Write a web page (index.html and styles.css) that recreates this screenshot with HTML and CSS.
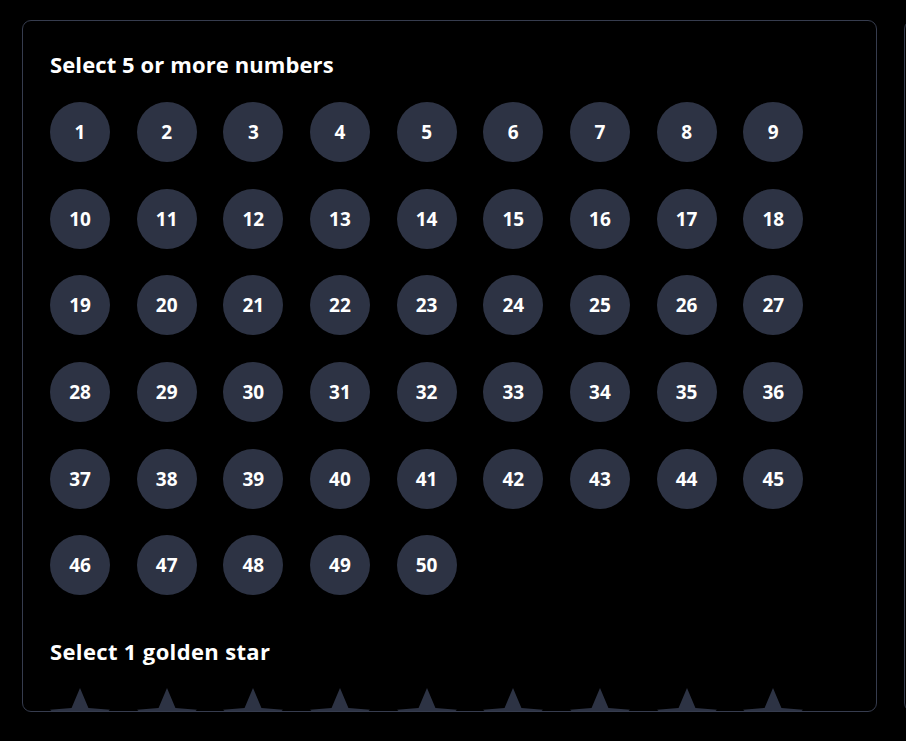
FILE: index.html
```html
<!doctype html>
<html lang="en">
  <head>
    <meta charset="utf-8">
    <meta name="viewport" content="width=device-width, initial-scale=1">
    <title>Pick your numbers</title>
    <link rel="stylesheet" href="styles.css">
  </head>
  <body>
    <main class="board">
      <section class="panel">
        <h2 class="panel-title">Select 5 or more numbers</h2>
        <div class="ball-grid" id="numbers"></div>

        <h2 class="panel-title stars-title">Select 1 golden star</h2>
        <div class="ball-grid" id="stars"></div>
      </section>
      <section class="panel panel-side"></section>
    </main>
    <script>
      const numbers = document.getElementById('numbers');
      for (let n = 1; n <= 50; n++) {
        const ball = document.createElement('button');
        ball.className = 'ball';
        ball.type = 'button';
        ball.textContent = n;
        numbers.appendChild(ball);
      }

      const stars = document.getElementById('stars');
      const starPath = 'M12 17.27L18.18 21l-1.64-7.03L22 9.24l-7.19-.61L12 2 9.19 8.63 2 9.24l5.46 4.73L5.82 21z';
      for (let n = 1; n <= 12; n++) {
        const star = document.createElement('button');
        star.className = 'star';
        star.type = 'button';
        star.innerHTML = '<svg viewBox="2 2 20 20" width="60" height="60"><path d="' + starPath + '"/></svg>';
        stars.appendChild(star);
      }
    </script>
  </body>
</html>
```

FILE: styles.css
```css
body {
  margin: 0;
  background: #000;
  color: #fff;
  font-family: "Open Sans", "DejaVu Sans", sans-serif;
}

.board {
  display: flex;
  gap: 27px;
  width: 906px;
  height: 741px;
  box-sizing: border-box;
  padding: 20px 0 0 22px;
  overflow: hidden;
}

.panel {
  flex: 0 0 855px;
  height: 692px;
  box-sizing: border-box;
  padding: 27px 27px 0;
  border: 1px solid #363c4e;
  border-radius: 9px;
  overflow: hidden;
}

.panel-side {
  flex-basis: 300px;
}

.panel-title {
  margin: 0 0 22px;
  font-size: 22px;
  line-height: 32px;
  font-weight: 700;
  letter-spacing: 0.1px;
}

.stars-title {
  margin-top: 40px;
  margin-bottom: 21px;
  letter-spacing: 0.35px;
}

.ball-grid {
  display: grid;
  grid-template-columns: repeat(9, 60px);
  gap: 26.67px;
}

.ball {
  width: 60px;
  height: 60px;
  padding: 0;
  border: none;
  border-radius: 50%;
  background: #2d3344;
  color: #fff;
  font-family: inherit;
  font-size: 19px;
  font-weight: 700;
  cursor: pointer;
}

.star {
  width: 60px;
  height: 60px;
  padding: 0;
  border: none;
  background: none;
  cursor: pointer;
}

.star svg {
  display: block;
  fill: #2d3344;
}
```
